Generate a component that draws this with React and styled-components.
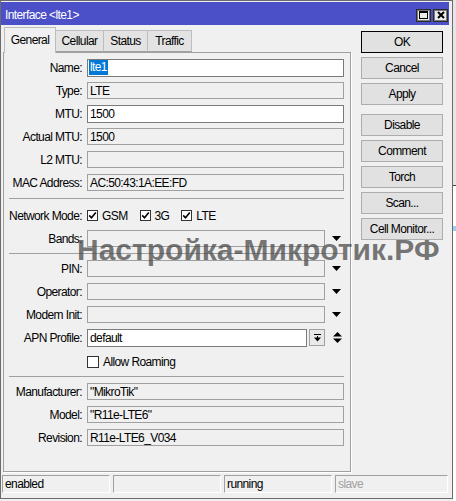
import React from "react";
import styled, { createGlobalStyle } from "styled-components";

const Global = createGlobalStyle`
  html, body { margin: 0; padding: 0; background: #f0f0f0; }
  body { font-family: "Liberation Sans", Arial, sans-serif; font-size: 12px; }
`;

const Page = styled.div`
  display: flex;
  width: 456px;
  height: 501px;
  overflow: hidden;
`;

const Win = styled.div`
  position: relative;
  flex-shrink: 0;
  width: 453px;
  height: 499px;
  box-sizing: border-box;
  border: 1px solid #6b6b6b;
  background: #f0f0f0;
  display: flex;
  flex-direction: column;
  letter-spacing: -0.6px;
  color: #000;
`;

const TitleBar = styled.div`
  height: 23px;
  margin: 1px 3px 0 0;
  background: #4b4fc8;
  color: #fff;
  display: flex;
  align-items: center;
  padding: 3px 1px 0 4px;
  box-sizing: border-box;
`;

const TitleText = styled.div`
  flex: 1;
  white-space: nowrap;
`;

const TitleControls = styled.div`
  display: flex;
  gap: 2px;
`;

const TitleBtn = styled.div`
  width: 15px;
  height: 13px;
  box-sizing: border-box;
  border: 1px solid #2b2b2b;
  box-shadow: inset 0 0 0 1px #7a7a7a;
  background: #ececec;
  display: flex;
  align-items: center;
  justify-content: center;
`;

const Body = styled.div`
  display: flex;
  padding-left: 2px;
`;

const MainCol = styled.div`
  width: 348px;
  display: flex;
  flex-direction: column;
`;

const TabStrip = styled.div`
  height: 27px;
  display: flex;
  align-items: flex-end;
  padding-left: 1px;
`;

const Tab = styled.div`
  position: relative;
  z-index: ${(p) => (p.$active ? 2 : 1)};
  width: ${(p) => p.$w}px;
  height: ${(p) => (p.$active ? 26 : 22)}px;
  margin-bottom: ${(p) => (p.$active ? -1 : 0)}px;
  box-sizing: border-box;
  border: 1px solid #bdbdbd;
  border-bottom: ${(p) => (p.$active ? "none" : "1px solid #a0a0a0")};
  border-left: ${(p) => (p.$first || p.$active ? "1px solid #bdbdbd" : "none")};
  background: ${(p) => (p.$active ? "#f0f0f0" : "#e3e3e3")};
  display: flex;
  align-items: center;
  justify-content: center;
  padding-bottom: ${(p) => (p.$active ? 1 : 0)}px;
`;

const Panel = styled.div`
  height: 420px;
  box-sizing: border-box;
  border: 1px solid #a0a0a0;
  box-shadow: 1px 1px 0 #ffffff;
  padding: 6px 6px 0 0;
  display: flex;
  flex-direction: column;
`;

const Section = styled.div`
  display: flex;
  flex-direction: column;
  gap: 6px;
`;

const Sep = styled.div`
  height: 1px;
  background: #a0a0a0;
  margin: ${(p) => p.$m};
  margin-left: 5px;
`;

const Row = styled.div`
  display: flex;
  align-items: center;
  height: 17px;
  margin-top: ${(p) => p.$mt || 0}px;
`;

const Label = styled.div`
  width: 78px;
  flex-shrink: 0;
  text-align: right;
  margin-right: 5px;
  white-space: nowrap;
`;

const Field = styled.div`
  flex: 1;
  height: ${(p) => (p.$editable ? 18 : 17)}px;
  box-sizing: border-box;
  border: 1px solid ${(p) => (p.$editable ? "#7a7a7a" : "#a0a0a0")};
  background: ${(p) => (p.$editable ? "#ffffff" : "transparent")};
  display: flex;
  align-items: center;
  padding: 0 2px;
  white-space: nowrap;
  overflow: hidden;
`;

const Selected = styled.span`
  background: #0078d7;
  color: #fff;
  margin-left: -1px;
  padding: 0 1px;
  line-height: 15px;
`;

const ArrowBox = styled.div`
  width: 19px;
  flex-shrink: 0;
  display: flex;
  align-items: center;
  padding-left: ${(p) => p.$pl || 7}px;
  box-sizing: border-box;
`;

const SmallBtn = styled.div`
  width: 16px;
  height: 17px;
  margin-left: 2px;
  box-sizing: border-box;
  border: 1px solid #a0a0a0;
  background: #e9e9e9;
  display: flex;
  align-items: center;
  justify-content: center;
  flex-shrink: 0;
`;

const CheckGroup = styled.div`
  display: flex;
  align-items: center;
  gap: 12px;
`;

const CheckItem = styled.div`
  display: flex;
  align-items: center;
  gap: 4px;
`;

const Box = styled.div`
  width: ${(p) => p.$s}px;
  height: ${(p) => p.$s}px;
  box-sizing: border-box;
  border: 1px solid #333;
  background: #fff;
  display: flex;
  align-items: center;
  justify-content: center;
`;

const ButtonCol = styled.div`
  margin-left: 10px;
  padding-top: 6px;
  display: flex;
  flex-direction: column;
  gap: 4px;
`;

const Btn = styled.div`
  width: 82px;
  height: 22px;
  box-sizing: border-box;
  border: 1px solid ${(p) => (p.$default ? "#000" : "#adadad")};
  background: #e1e1e1;
  display: flex;
  align-items: center;
  justify-content: center;
  margin-top: ${(p) => p.$mt || 0}px;
`;

const StatusBar = styled.div`
  display: flex;
  gap: 3px;
  height: 18px;
  margin-top: 3px;
  padding: 0 4px 0 1px;
`;

const StatusCell = styled.div`
  width: ${(p) => (p.$w ? `${p.$w}px` : "auto")};
  flex: ${(p) => (p.$w ? "none" : 1)};
  box-sizing: border-box;
  border-top: 1px solid #a0a0a0;
  border-left: 1px solid #a0a0a0;
  border-bottom: 1px solid #fff;
  border-right: 1px solid #fff;
  padding-left: 2px;
  display: flex;
  align-items: center;
  color: ${(p) => p.$color || "#000"};
`;

const Watermark = styled.div`
  position: absolute;
  left: 76px;
  top: 238px;
  font-family: "Liberation Sans", Arial, sans-serif;
  font-weight: bold;
  font-size: 30px;
  line-height: 22px;
  letter-spacing: 0;
  color: rgba(70, 70, 70, 0.72);
  white-space: nowrap;
  pointer-events: none;
`;

const Backdrop = styled.div`
  flex: 1;
  display: flex;
  flex-direction: column;
`;

const BackTop = styled.div`
  height: 185px;
  background: #e6e6e6;
`;

const BackLine = styled.div`
  height: 1px;
  background: #444;
`;

const BackWhite = styled.div`
  flex: 1;
  background: #fff;
  padding-top: 40px;
`;

const BackSel = styled.div`
  height: 5px;
  background: #9fcdf2;
`;

const DownArrow = () => (
  <svg width="9" height="5" viewBox="0 0 9 5">
    <polygon points="0,0 9,0 4.5,5" fill="#000" />
  </svg>
);

const UpDown = () => (
  <svg width="9" height="11" viewBox="0 0 9 11">
    <polygon points="0,4.5 9,4.5 4.5,0" fill="#000" />
    <polygon points="0,6.5 9,6.5 4.5,11" fill="#000" />
  </svg>
);

const BarDown = () => (
  <svg width="7" height="8" viewBox="0 0 7 8">
    <rect x="0" y="0" width="7" height="1" fill="#000" />
    <rect x="3" y="2" width="1" height="2" fill="#000" />
    <polygon points="0,3.5 7,3.5 3.5,7.5" fill="#000" />
  </svg>
);

const Check = () => (
  <svg width="9" height="9" viewBox="0 0 9 9">
    <path d="M1.2 4.4 L3.5 6.7 L7.8 1.6" stroke="#000" strokeWidth="1.6" fill="none" />
  </svg>
);

const MaxIcon = () => (
  <svg width="9" height="8" viewBox="0 0 9 8">
    <rect x="0.5" y="0.5" width="8" height="7" fill="none" stroke="#000" />
    <rect x="0" y="0" width="9" height="2" fill="#000" />
  </svg>
);

const CloseIcon = () => (
  <svg width="8" height="8" viewBox="0 0 8 8">
    <path d="M1 1 L7 7 M7 1 L1 7" stroke="#000" strokeWidth="2" />
  </svg>
);

const tabs = [
  { name: "General", w: 52 },
  { name: "Cellular", w: 48 },
  { name: "Status", w: 44 },
  { name: "Traffic", w: 44 },
];

export default function App() {
  return (
    <Page>
      <Global />
      <Win>
        <TitleBar>
          <TitleText>Interface &lt;lte1&gt;</TitleText>
          <TitleControls>
            <TitleBtn><MaxIcon /></TitleBtn>
            <TitleBtn><CloseIcon /></TitleBtn>
          </TitleControls>
        </TitleBar>
        <Body>
          <MainCol>
            <TabStrip>
              {tabs.map((t, i) => (
                <Tab key={t.name} $w={t.w} $active={i === 0} $first={i === 0}>
                  {t.name}
                </Tab>
              ))}
            </TabStrip>
            <Panel>
              <Section>
                <Row>
                  <Label>Name:</Label>
                  <Field $editable><Selected>lte1</Selected></Field>
                </Row>
                <Row>
                  <Label>Type:</Label>
                  <Field>LTE</Field>
                </Row>
                <Row>
                  <Label>MTU:</Label>
                  <Field $editable>1500</Field>
                </Row>
                <Row>
                  <Label>Actual MTU:</Label>
                  <Field>1500</Field>
                </Row>
                <Row>
                  <Label>L2 MTU:</Label>
                  <Field />
                </Row>
                <Row>
                  <Label>MAC Address:</Label>
                  <Field>AC:50:43:1A:EE:FD</Field>
                </Row>
              </Section>
              <Sep $m="7px 0 8px" />
              <Section>
                <Row>
                  <Label>Network Mode:</Label>
                  <CheckGroup>
                    <CheckItem><Box $s={11}><Check /></Box>GSM</CheckItem>
                    <CheckItem><Box $s={11}><Check /></Box>3G</CheckItem>
                    <CheckItem><Box $s={11}><Check /></Box>LTE</CheckItem>
                  </CheckGroup>
                </Row>
                <Row>
                  <Label>Bands:</Label>
                  <Field />
                  <ArrowBox><DownArrow /></ArrowBox>
                </Row>
              </Section>
              <Sep $m="6px 0 6px" />
              <Section>
                <Row>
                  <Label>PIN:</Label>
                  <Field />
                  <ArrowBox><DownArrow /></ArrowBox>
                </Row>
                <Row>
                  <Label>Operator:</Label>
                  <Field />
                  <ArrowBox><DownArrow /></ArrowBox>
                </Row>
                <Row>
                  <Label>Modem Init:</Label>
                  <Field />
                  <ArrowBox><DownArrow /></ArrowBox>
                </Row>
                <Row>
                  <Label>APN Profile:</Label>
                  <Field $editable>default</Field>
                  <SmallBtn><BarDown /></SmallBtn>
                  <ArrowBox $pl={8}><UpDown /></ArrowBox>
                </Row>
                <Row $mt={1}>
                  <Label />
                  <CheckItem><Box $s={12} />Allow Roaming</CheckItem>
                </Row>
              </Section>
              <Sep $m="6px 0 6px" />
              <Section>
                <Row>
                  <Label>Manufacturer:</Label>
                  <Field>"MikroTik"</Field>
                </Row>
                <Row>
                  <Label>Model:</Label>
                  <Field>"R11e-LTE6"</Field>
                </Row>
                <Row>
                  <Label>Revision:</Label>
                  <Field>R11e-LTE6_V034</Field>
                </Row>
              </Section>
            </Panel>
          </MainCol>
          <ButtonCol>
            <Btn $default>OK</Btn>
            <Btn>Cancel</Btn>
            <Btn>Apply</Btn>
            <Btn $mt={5}>Disable</Btn>
            <Btn>Comment</Btn>
            <Btn>Torch</Btn>
            <Btn>Scan...</Btn>
            <Btn>Cell Monitor...</Btn>
          </ButtonCol>
        </Body>
        <StatusBar>
          <StatusCell $w={108}>enabled</StatusCell>
          <StatusCell $w={108} />
          <StatusCell $w={108}>running</StatusCell>
          <StatusCell $color="#a0a0a0">slave</StatusCell>
        </StatusBar>
        <Watermark>Настройка-Микротик.РФ</Watermark>
      </Win>
      <Backdrop>
        <BackTop />
        <BackLine />
        <BackWhite><BackSel /></BackWhite>
      </Backdrop>
    </Page>
  );
}
